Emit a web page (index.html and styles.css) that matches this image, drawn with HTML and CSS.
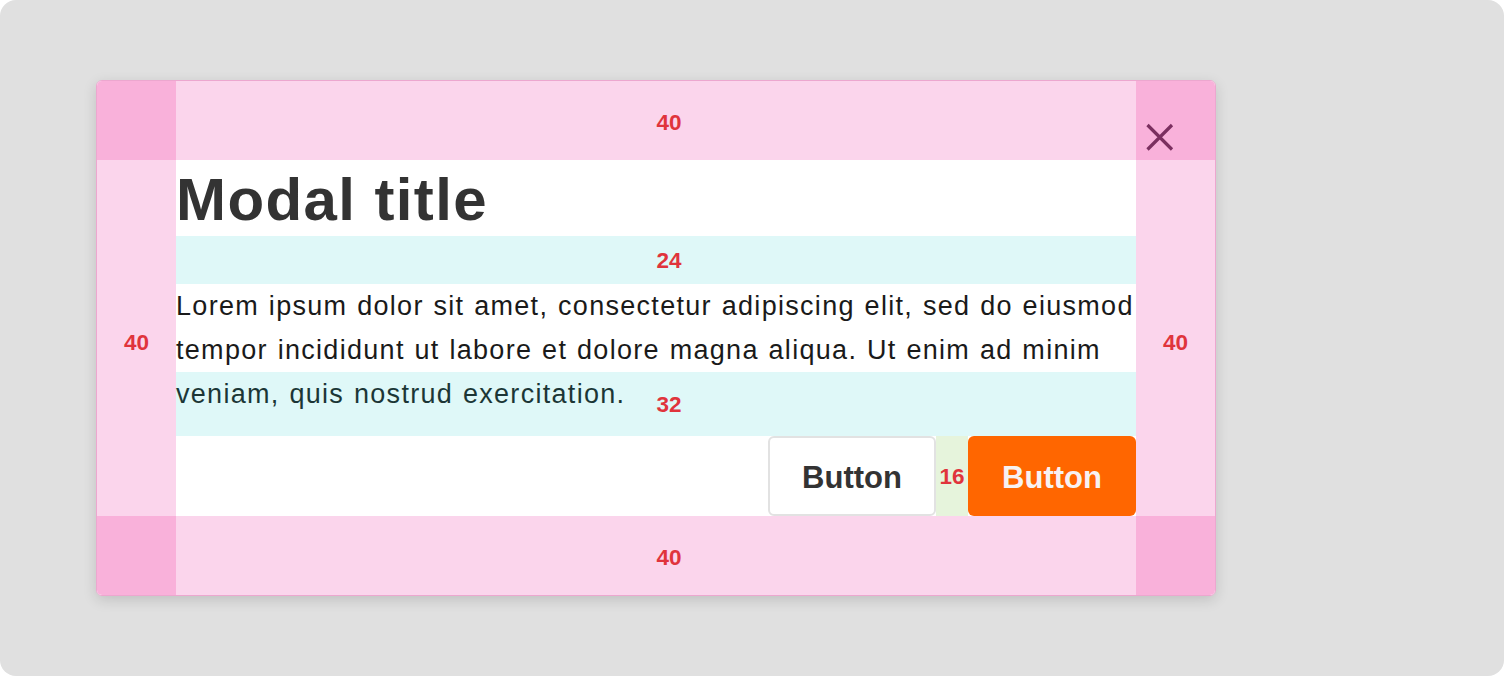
FILE: index.html
```html
<!DOCTYPE html>
<html>
<head>
<meta charset="utf-8">
<link rel="stylesheet" href="styles.css">
</head>
<body>
<div class="canvas">
  <div class="modal">
    <div class="pad corner"></div>
    <div class="pad shift"><span class="lbl">40</span></div>
    <div class="pad corner"></div>
    <div class="pad"><span class="lbl side">40</span></div>
    <div class="content">
      <h1 class="title">Modal title</h1>
      <div class="gap gap-24"><span class="lbl">24</span></div>
      <p class="body-text">Lorem ipsum dolor sit amet, consectetur adipiscing elit, sed do eiusmod tempor incididunt ut labore et dolore magna aliqua. Ut enim ad minim veniam, quis nostrud exercitation.</p>
      <div class="gap gap-32"><span class="lbl">32</span></div>
      <div class="actions">
        <button class="btn btn-secondary">Button</button>
        <div class="btn-gap"><span class="lbl">16</span></div>
        <button class="btn btn-primary">Button</button>
      </div>
    </div>
    <div class="pad"><span class="lbl side">40</span></div>
    <div class="pad corner"></div>
    <div class="pad shift"><span class="lbl">40</span></div>
    <div class="pad corner"></div>
    <button class="close" aria-label="Close">
      <svg width="30" height="30" viewBox="0 0 30 30"><path d="M2.5 3 L27 27.5 M27 3 L2.5 27.5" stroke="#7b2f5f" stroke-width="3.2" fill="none"/></svg>
    </button>
  </div>
</div>
</body>
</html>
```
FILE: styles.css
```css
* { box-sizing: border-box; }
html, body { margin: 0; padding: 0; background: #ffffff; }
body { font-family: "Liberation Sans", Arial, sans-serif; }
.canvas {
  width: 1504px;
  height: 676px;
  background: #e0e0e0;
  border-radius: 16px;
  padding: 80px 0 0 96px;
}
.modal {
  position: relative;
  width: 1120px;
  display: grid;
  grid-template-columns: 79px 960px 79px;
  grid-template-rows: 79px auto 79px;
  border: 1px solid #eca7cf;
  border-radius: 6px;
  overflow: hidden;
  background: #ffffff;
  box-shadow: 0 4px 14px rgba(0,0,0,0.14);
}
.pad {
  background: #fbd5ec;
  display: flex;
  align-items: center;
  justify-content: center;
}
.pad.shift { padding-left: 26px; padding-top: 4px; }
.pad.corner { background: #f9b1da; }
.lbl {
  position: relative;
  top: 1px;
  color: #e0343c;
  font-weight: 700;
  font-size: 22.5px;
  line-height: 1;
}
.lbl.side { top: 5px; }
.content {
  display: flex;
  flex-direction: column;
  background: #ffffff;
}
.title {
  margin: 0;
  height: 76px;
  font-size: 60px;
  line-height: 80px;
  font-weight: 700;
  color: #333333;
  letter-spacing: 1.4px;
}
.gap {
  position: relative;
  background: rgba(40, 208, 210, 0.15);
  display: flex;
  align-items: center;
  justify-content: center;
  padding-left: 26px;
}
.gap-24 { height: 48px; }
.gap-32 { height: 64px; }
.body-text {
  margin: 0;
  height: 88px;
  font-size: 27px;
  line-height: 44px;
  color: #1a1a1a;
  letter-spacing: 1.3px;
  word-spacing: 1px;
}
.actions {
  height: 80px;
  display: flex;
  justify-content: flex-end;
}
.btn {
  width: 168px;
  height: 80px;
  font-family: "Liberation Sans", Arial, sans-serif;
  font-weight: 700;
  font-size: 31px;
  border-radius: 6px;
  padding: 4px 0 0;
  cursor: pointer;
}
.btn-secondary {
  background: #ffffff;
  border: 2px solid #e2e2e2;
  color: #333333;
}
.btn-primary {
  background: #ff6600;
  border: none;
  color: #f7f2f2;
}
.btn-gap {
  width: 32px;
  background: #e6f4dc;
  display: flex;
  align-items: center;
  justify-content: center;
}
.close {
  position: absolute;
  top: 40px;
  left: 1047px;
  width: 32px;
  height: 32px;
  padding: 0;
  border: none;
  background: transparent;
  display: flex;
  align-items: center;
  justify-content: center;
}
```
